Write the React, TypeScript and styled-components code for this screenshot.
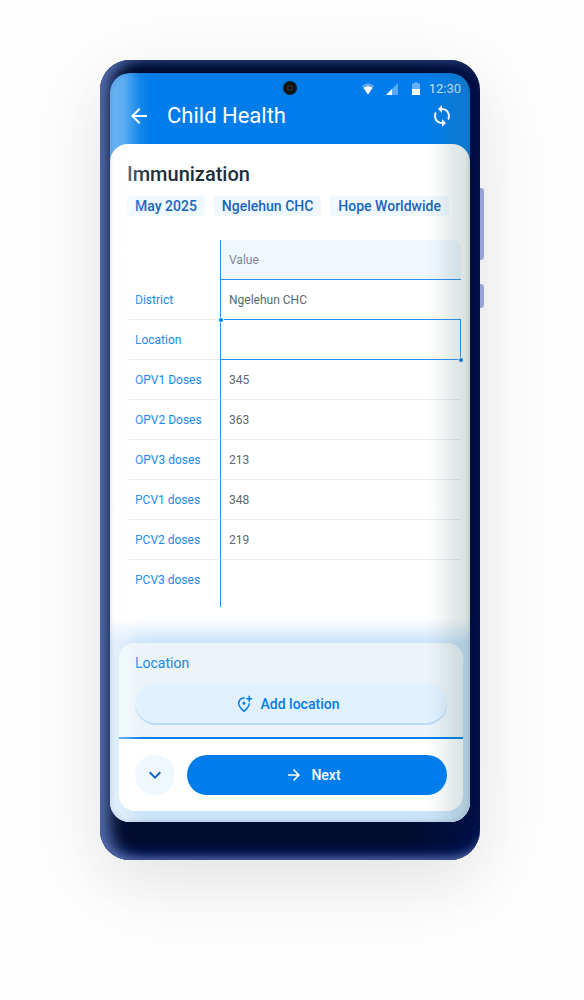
import React from "react";
import styled, { createGlobalStyle } from "styled-components";
import {
  MdArrowBack,
  MdArrowForward,
  MdExpandMore,
  MdOutlineAddLocationAlt,
  MdSync,
} from "react-icons/md";

const color = {
  primary: "#007deb",
  primaryDark: "#1565c0",
  label: "#1a86ec",
  rule: "#2a90f0",
  tint: "#f0f8ff",
  line: "#e9edef",
  ink: "#212f3c",
  muted: "#7b8793",
  value: "#5a6773",
};

const GlobalStyle = createGlobalStyle`
  *, *::before, *::after { box-sizing: border-box; }
  body {
    margin: 0;
    background: #fefefe;
    font-family: Roboto, "Liberation Sans", sans-serif;
    color: ${color.ink};
  }
  button { font: inherit; border: 0; margin: 0; cursor: pointer; }
`;

const Page = styled.main`
  min-height: 100vh;
  display: flex;
  justify-content: center;
  align-items: flex-start;
  padding: 60px 0 140px;
`;

const Device = styled.div`
  display: flex;
  width: 100%;
  max-width: 384px;
`;

const Frame = styled.div`
  flex: 1;
  min-width: 0;
  padding: 13px 10px 38px;
  border-radius: 30px;
  background: linear-gradient(90deg, #000c2e 0%, #000c2e 80%, #001046 100%);
  box-shadow:
    inset 0 -10px 8px -8px #5468a4,
    inset 16px 0 16px -6px #5670ae,
    inset 0 10px 8px -6px #10265a,
    inset 0 -16px 14px -8px #061c60,
    0 20px 90px rgba(0, 0, 0, 0.09),
    0 24px 50px rgba(0, 0, 0, 0.03);
`;

const SideRail = styled.div`
  display: flex;
  flex-direction: column;
  gap: 24px;
  width: 4px;
  padding-top: 128px;
`;

const SideKey = styled.span<{ $height: number }>`
  height: ${(p) => p.$height}px;
  border-radius: 0 3px 3px 0;
  background: #98a5da;
`;

const Screen = styled.div`
  position: relative;
  display: flex;
  flex-direction: column;
  border-radius: 20px;
  overflow: hidden;
  background: ${color.primary};

  &::after {
    content: "";
    position: absolute;
    inset: 0;
    border-radius: inherit;
    pointer-events: none;
    background:
      linear-gradient(90deg, rgba(255, 255, 255, 0.42), rgba(255, 255, 255, 0.36) 14px, rgba(255, 255, 255, 0.08) 30px, transparent 40px),
      linear-gradient(270deg, rgba(70, 110, 110, 0.22), rgba(70, 110, 110, 0.14) 18px, rgba(70, 110, 110, 0.03) 34px, transparent 44px);
    box-shadow: inset 0 0 5px rgba(30, 50, 60, 0.2);
  }
`;

const Header = styled.header`
  display: flex;
  flex-direction: column;
  padding: 6px 0 10px;
  color: #fff;
`;

const StatusBar = styled.div`
  display: grid;
  grid-template-columns: 1fr auto 1fr;
  align-items: center;
  height: 18px;
  padding: 0 9px;
`;

const StatusIcons = styled.div`
  grid-column: 3;
  display: flex;
  justify-content: flex-end;
  align-items: center;
  gap: 8px;
  padding-top: 2px;
  font-size: 13px;
  line-height: 16px;
  color: rgba(255, 255, 255, 0.8);
`;

const NavBar = styled.div`
  display: flex;
  align-items: center;
  gap: 16px;
  height: 37px;
  padding: 0 16px 0 17px;
`;

const AppTitle = styled.h1`
  flex: 1;
  margin: 0;
  font-size: 22px;
  line-height: 32px;
  font-weight: 400;
`;

const IconButton = styled.button`
  display: flex;
  padding: 0;
  background: none;
  color: inherit;
  font-size: 24px;
`;

const Content = styled.div`
  display: flex;
  flex-direction: column;
  border-radius: 18px 18px 0 0;
  background: #fff;
`;

const Section = styled.section`
  padding: 16px 9px 0 17px;
`;

const SectionTitle = styled.h2`
  margin: 0 0 8px;
  font-size: 20px;
  line-height: 28px;
  font-weight: 500;
`;

const Chips = styled.ul`
  display: flex;
  gap: 9px;
  margin: 0 0 24px;
  padding: 0;
  list-style: none;
`;

const Chip = styled.li`
  padding: 0 8px;
  border-radius: 4px;
  background: ${color.tint};
  color: ${color.primaryDark};
  font-size: 14px;
  line-height: 20px;
  font-weight: 500;
  white-space: nowrap;
`;

const DataTable = styled.table`
  width: 100%;
  border-collapse: separate;
  border-spacing: 0;
  table-layout: fixed;
  font-size: 12px;
  line-height: 16px;
  text-align: left;
`;

const CornerCell = styled.td`
  width: 93px;
  height: 40px;
  padding: 0;
`;

const ColumnHead = styled.th`
  padding: 0 8px;
  border-left: 1px solid ${color.rule};
  border-bottom: 1px solid ${color.rule};
  border-top-right-radius: 8px;
  background: ${color.tint};
  color: ${color.muted};
  font-weight: 400;
`;

const RowHead = styled.th<{ $last?: boolean }>`
  height: 40px;
  padding: 0 8px;
  border-bottom: ${(p) => (p.$last ? "0" : `1px solid ${color.line}`)};
  color: ${color.label};
  font-weight: 400;
  white-space: nowrap;
`;

const ValueCell = styled.td<{ $selected?: boolean; $aboveSelected?: boolean; $last?: boolean }>`
  position: relative;
  padding: 0 8px;
  border-left: 1px solid ${color.rule};
  border-right: ${(p) => (p.$selected ? `1px solid ${color.rule}` : "0")};
  border-bottom: ${(p) =>
    p.$last
      ? "0"
      : `1px solid ${p.$selected || p.$aboveSelected ? color.rule : color.line}`};
  color: ${color.value};
`;

const TableEnd = styled.td<{ $ruled?: boolean }>`
  height: 7px;
  padding: 0;
  border-left: ${(p) => (p.$ruled ? `1px solid ${color.rule}` : "0")};
`;

const Handle = styled.span<{ $corner: "start" | "end" }>`
  position: absolute;
  width: 6px;
  height: 6px;
  border: 1px solid #fff;
  border-radius: 50%;
  background: ${color.primary};
  ${(p) => (p.$corner === "start" ? "top: -3px; left: -3px;" : "bottom: -4px; right: -4px;")}
`;

const Dock = styled.div`
  margin-top: 12px;
  padding: 24px 7px 11px 9px;
  background: linear-gradient(180deg, #fff, #cbe3f9 24px, #cbe3f9);
`;

const Sheet = styled.section`
  border-radius: 16px;
  overflow: hidden;
  background: #fff;
`;

const FieldPanel = styled.div`
  padding: 8px 16px 12px;
  border-bottom: 2px solid ${color.primary};
  background: #ecf4f8;
`;

const FieldLabel = styled.h3`
  margin: 0 0 8px;
  font-size: 14px;
  line-height: 24px;
  font-weight: 400;
  color: ${color.label};
`;

const PillButton = styled.button<{ $filled?: boolean }>`
  position: relative;
  z-index: ${(p) => (p.$filled ? 1 : "auto")};
  display: flex;
  flex: 1;
  align-items: center;
  justify-content: center;
  gap: 8px;
  width: 100%;
  height: ${(p) => (p.$filled ? 40 : 42)}px;
  padding: 0 24px 0 16px;
  border-radius: 21px;
  background: ${(p) => (p.$filled ? color.primary : "#e1f1ff")};
  color: ${(p) => (p.$filled ? "#fff" : color.primary)};
  box-shadow: ${(p) => (p.$filled ? "none" : "inset 0 -2px 0 #b8dbfb")};
  font-size: 14px;
  line-height: 20px;
  font-weight: 500;

  svg {
    font-size: 18px;
  }
`;

const Actions = styled.div`
  display: flex;
  gap: 12px;
  padding: 16px;
`;

const RoundButton = styled.button`
  display: flex;
  align-items: center;
  justify-content: center;
  width: 40px;
  height: 40px;
  padding: 0;
  border-radius: 50%;
  background: ${color.tint};
  color: ${color.primaryDark};
  font-size: 24px;
`;

const CameraDrawing = styled.svg`
  grid-column: 2;
`;

const BatteryDrawing = styled.svg`
  margin-left: 4px;
`;

function Camera() {
  return (
    <CameraDrawing width="14" height="14" viewBox="0 0 14 14" aria-hidden="true">
      <circle cx="7" cy="7" r="7" fill="#171717" />
      <circle cx="7" cy="7" r="4" fill="#2c2c2c" stroke="#080808" />
      <circle cx="7" cy="7" r="1.6" fill="#0a0a0a" />
    </CameraDrawing>
  );
}

function WifiIcon() {
  return (
    <svg width="16" height="14" viewBox="0 0 16 14" aria-hidden="true">
      <path d="M0.800 3.800Q7-1.400 13.200 3.800L7 12.500Z" fill="#fff" opacity="0.35" />
      <path d="M2.400 5.800Q7 2.600 11.600 5.800L7 12.500Z" fill="#fff" />
    </svg>
  );
}

function SignalIcon() {
  return (
    <svg width="14" height="14" viewBox="0 0 14 14" aria-hidden="true">
      <path d="M13 1V13H1Z" fill="#fff" opacity="0.35" />
      <path d="M7 7V13H1Z" fill="#fff" />
    </svg>
  );
}

function BatteryIcon() {
  return (
    <BatteryDrawing width="10" height="14" viewBox="0 0 10 14" aria-hidden="true">
      <path d="M3 0.500H7V1.500H9V7H1V1.500H3Z" fill="#fff" opacity="0.4" />
      <path d="M1 7H9V13H1Z" fill="#fff" />
    </BatteryDrawing>
  );
}

const chips = ["May 2025", "Ngelehun CHC", "Hope Worldwide"];

const rows = [
  { label: "District", value: "Ngelehun CHC" },
  { label: "Location", value: "" },
  { label: "OPV1 Doses", value: "345" },
  { label: "OPV2 Doses", value: "363" },
  { label: "OPV3 doses", value: "213" },
  { label: "PCV1 doses", value: "348" },
  { label: "PCV2 doses", value: "219" },
  { label: "PCV3 doses", value: "" },
];

const selectedRow = 1;

export default function App() {
  return (
    <>
      <GlobalStyle />
      <Page>
        <Device>
          <Frame>
            <Screen>
              <Header>
                <StatusBar>
                  <Camera />
                  <StatusIcons>
                    <WifiIcon />
                    <SignalIcon />
                    <BatteryIcon />
                    <span>12:30</span>
                  </StatusIcons>
                </StatusBar>
                <NavBar>
                  <IconButton type="button" aria-label="Back">
                    <MdArrowBack />
                  </IconButton>
                  <AppTitle>Child Health</AppTitle>
                  <IconButton type="button" aria-label="Sync">
                    <MdSync />
                  </IconButton>
                </NavBar>
              </Header>
              <Content>
                <Section>
                  <SectionTitle>Immunization</SectionTitle>
                  <Chips>
                    {chips.map((chip) => (
                      <Chip key={chip}>{chip}</Chip>
                    ))}
                  </Chips>
                  <DataTable>
                    <thead>
                      <tr>
                        <CornerCell />
                        <ColumnHead scope="col">Value</ColumnHead>
                      </tr>
                    </thead>
                    <tbody>
                      {rows.map((row, i) => {
                        const last = i === rows.length - 1;
                        const selected = i === selectedRow;
                        return (
                          <tr key={row.label}>
                            <RowHead scope="row" $last={last}>
                              {row.label}
                            </RowHead>
                            <ValueCell
                              $last={last}
                              $selected={selected}
                              $aboveSelected={i === selectedRow - 1}
                            >
                              {row.value}
                              {selected && <Handle $corner="start" />}
                              {selected && <Handle $corner="end" />}
                            </ValueCell>
                          </tr>
                        );
                      })}
                      <tr>
                        <TableEnd />
                        <TableEnd $ruled />
                      </tr>
                    </tbody>
                  </DataTable>
                </Section>
                <Dock>
                  <Sheet>
                    <FieldPanel>
                      <FieldLabel>Location</FieldLabel>
                      <PillButton type="button">
                        <MdOutlineAddLocationAlt />
                        Add location
                      </PillButton>
                    </FieldPanel>
                    <Actions>
                      <RoundButton type="button" aria-label="Collapse">
                        <MdExpandMore />
                      </RoundButton>
                      <PillButton type="button" $filled>
                        <MdArrowForward />
                        Next
                      </PillButton>
                    </Actions>
                  </Sheet>
                </Dock>
              </Content>
            </Screen>
          </Frame>
          <SideRail aria-hidden="true">
            <SideKey $height={72} />
            <SideKey $height={24} />
          </SideRail>
        </Device>
      </Page>
    </>
  );
}
